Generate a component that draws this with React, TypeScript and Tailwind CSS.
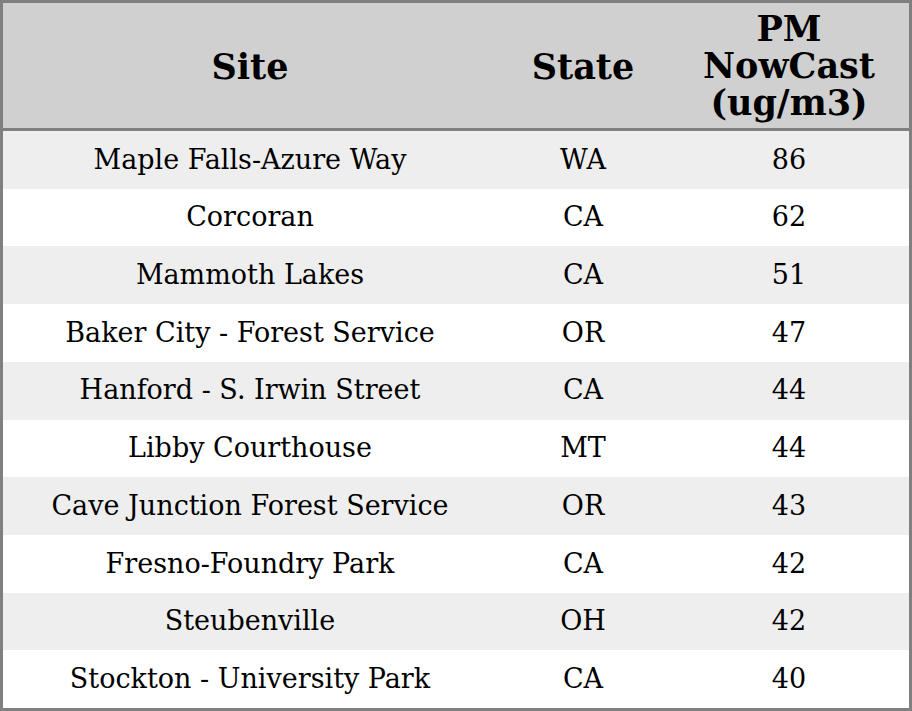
import React from "react";

const rows: [string, string, string][] = [
  ["Maple Falls-Azure Way", "WA", "86"],
  ["Corcoran", "CA", "62"],
  ["Mammoth Lakes", "CA", "51"],
  ["Baker City - Forest Service", "OR", "47"],
  ["Hanford - S. Irwin Street", "CA", "44"],
  ["Libby Courthouse", "MT", "44"],
  ["Cave Junction Forest Service", "OR", "43"],
  ["Fresno-Foundry Park", "CA", "42"],
  ["Steubenville", "OH", "42"],
  ["Stockton - University Park", "CA", "40"],
];

export default function App() {
  return (
    <div
      className="w-[912px] h-[711px] bg-white text-black border-[3px] border-[#808080] flex flex-col"
      style={{ fontFamily: '"DejaVu Serif", serif' }}
    >
      <div className="h-[128px] shrink-0 bg-[#d0d0d0] border-b-[3px] border-[#808080] grid grid-cols-[494px_172px_240px] items-center text-center font-bold text-[35px] leading-[37px]">
        <div className="pt-[1px]">Site</div>
        <div className="pt-[1px]">State</div>
        <div>
          PM
          <br />
          NowCast
          <br />
          (ug/m3)
        </div>
      </div>
      <div className="flex-1 flex flex-col">
        {rows.map((r, i) => (
          <div
            key={i}
            className={`flex-1 grid grid-cols-[494px_172px_240px] items-center text-center text-[27px] ${
              i % 2 === 0 ? "bg-[#eeeeee]" : "bg-white"
            }`}
          >
            <div>{r[0]}</div>
            <div>{r[1]}</div>
            <div>{r[2]}</div>
          </div>
        ))}
      </div>
    </div>
  );
}
